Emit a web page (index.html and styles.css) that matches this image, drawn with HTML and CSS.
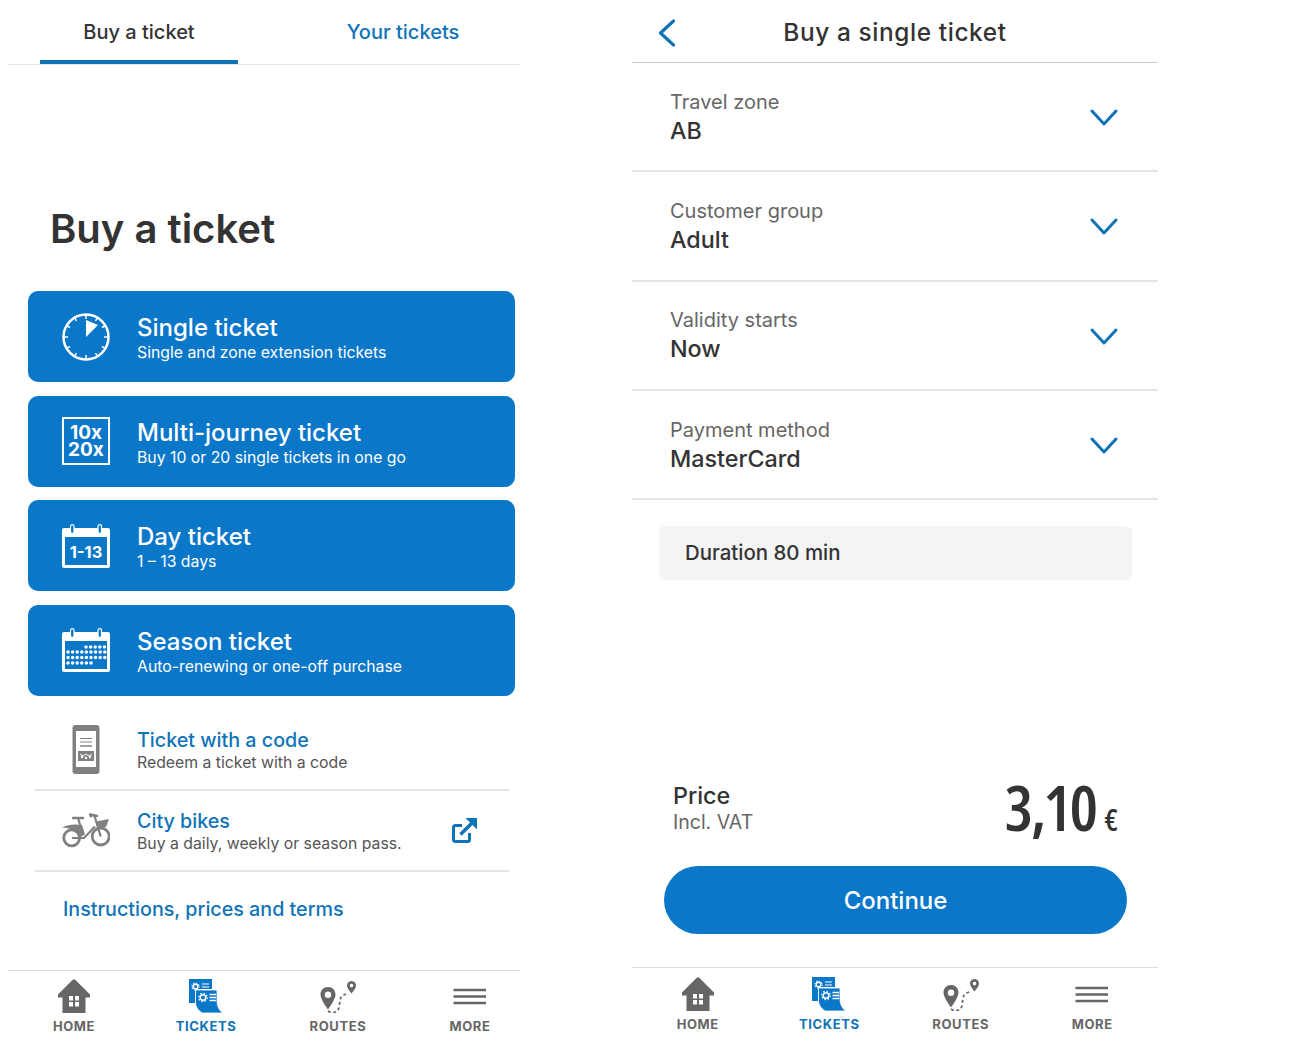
FILE: index.html
```html
<!DOCTYPE html>
<html lang="en">
<head>
  <meta charset="UTF-8">
  <meta name="viewport" content="width=device-width, initial-scale=1.0">
  <title>Buy a ticket</title>
  <link rel="stylesheet" href="styles.css">
</head>
<body>
  <svg class="icon-defs" aria-hidden="true">
    <symbol id="i-home" viewBox="0 0 34 34">
      <path fill="currentColor" fill-rule="evenodd" d="M15.500 1 Q17 -0.500 18.500 1 L33 15.500 V18.500 H28.500 V34 H5.500 V18.500 H1 V15.500 Z M12 17 V21.500 H16 V17 Z M18 17 V21.500 H22 V17 Z M12 23 V27.500 H16 V23 Z M18 23 V27.500 H22 V23 Z"/>
    </symbol>
    <symbol id="i-tickets" viewBox="0 0 34 34">
      <path fill="currentColor" d="M0 0 H23 V10 H6 V24 H0 Z"/>
      <path fill="currentColor" stroke="#fff" stroke-width="0.800" d="M6.500 11 H28 V22 C28 27 30 31 33.500 34 H13 C9 31 6.500 28 6.500 23 Z"/>
      <g fill="none" stroke="#fff">
        <circle cx="6.500" cy="7.500" r="2.300" stroke-width="1.400"/>
        <circle cx="6.500" cy="7.500" r="3.500" stroke-width="1.200" stroke-dasharray="1.300 1.450"/>
        <path stroke-width="1.200" d="M13 5 H20 M13 8 H20"/>
        <circle cx="14" cy="18.500" r="2.800" stroke-width="1.500"/>
        <circle cx="14" cy="18.500" r="4.200" stroke-width="1.300" stroke-dasharray="1.500 1.800"/>
        <path stroke-width="1.300" d="M20.500 15.500 H27 M20.500 18.500 H27 M20.500 21.500 H27"/>
      </g>
    </symbol>
    <symbol id="i-routes" viewBox="0 0 36 32">
      <path fill="currentColor" fill-rule="evenodd" d="M8 6 C3.500 6 0.500 9.500 0.500 13.500 C0.500 18 5 24 8 28.500 C11 24 15.500 18 15.500 13.500 C15.500 9.500 12.500 6 8 6 Z M8 10.500 A3.200 3.200 0 1 1 8 16.900 A3.200 3.200 0 0 1 8 10.500 Z"/>
      <path fill="currentColor" fill-rule="evenodd" d="M31.500 0 C28.500 0 27 2.200 27 4.500 C27 7 29.500 10 31.500 12.500 C33.500 10 36 7 36 4.500 C36 2.200 34.500 0 31.500 0 Z M31.500 2.800 A1.800 1.800 0 1 1 31.500 6.400 A1.800 1.800 0 0 1 31.500 2.800 Z"/>
      <path fill="none" stroke="currentColor" stroke-width="1.700" stroke-dasharray="3 2.500" d="M8 30 C12 33 17 32 19 27 C20 23 19 18 22 15 C24 13.500 26 13.500 28 12"/>
    </symbol>
    <symbol id="i-more" viewBox="0 0 34 17">
      <path fill="none" stroke="currentColor" stroke-width="2.300" d="M0.500 2 H33 M0.500 8.500 H33 M0.500 15 H33"/>
    </symbol>
    <symbol id="i-chevron" viewBox="0 0 28 17">
      <path fill="none" stroke="currentColor" stroke-width="3" stroke-linecap="round" stroke-linejoin="round" d="M2 2 L14 15 L26 2"/>
    </symbol>
    <symbol id="i-calendar" viewBox="0 0 48 44">
      <path fill="#fff" d="M2 4 H46 A2 2 0 0 1 48 6 V42 A2 2 0 0 1 46 44 H2 A2 2 0 0 1 0 42 V6 A2 2 0 0 1 2 4 Z"/>
      <rect x="3" y="13" width="42" height="28" fill="#0a77c9"/>
      <g fill="#0a77c9" stroke="#fff" stroke-width="1.200">
        <rect x="8.500" y="0.600" width="3.500" height="9" rx="1.750"/>
        <rect x="36" y="0.600" width="3.500" height="9" rx="1.750"/>
      </g>
    </symbol>
  </svg>

  <div class="screens">
    <section class="screen screen-list">
      <div class="tabs">
        <div class="tab active">Buy a ticket</div>
        <div class="tab">Your tickets</div>
      </div>

      <h1 class="page-title">Buy a ticket</h1>

      <div class="cards">
        <div class="card">
          <svg class="card-icon" viewBox="0 0 48 48">
            <circle cx="24" cy="24" r="22.500" fill="none" stroke="#fff" stroke-width="2.500"/>
            <path fill="none" stroke="#fff" stroke-width="1.500" d="M24 1.500 V6 M35.500 4.500 L33.500 8 M43.500 12.500 L40 14.500 M46.500 24 H42 M43.500 35.500 L40 33.500 M35.500 43.500 L33.500 40 M24 46.500 V42 M12.500 43.500 L14.500 40 M4.500 35.500 L8 33.500 M1.500 24 H6 M4.500 12.500 L8 14.500 M12.500 4.500 L14.500 8"/>
            <path fill="#fff" d="M24 24 V7 L36 12 Z"/>
          </svg>
          <div class="card-text">
            <div class="card-title">Single ticket</div>
            <div class="card-sub">Single and zone extension tickets</div>
          </div>
        </div>
        <div class="card">
          <div class="count-icon">10x<br>20x</div>
          <div class="card-text">
            <div class="card-title">Multi-journey ticket</div>
            <div class="card-sub">Buy 10 or 20 single tickets in one go</div>
          </div>
        </div>
        <div class="card">
          <svg class="card-icon" viewBox="0 0 48 44">
            <use href="#i-calendar"/>
            <text class="icon-text" x="24" y="33.500" font-size="16.500">1-13</text>
          </svg>
          <div class="card-text">
            <div class="card-title">Day ticket</div>
            <div class="card-sub">1 – 13 days</div>
          </div>
        </div>
        <div class="card">
          <svg class="card-icon" viewBox="0 0 48 44">
            <use href="#i-calendar"/>
            <g fill="none" stroke="#fff" stroke-width="3.500" stroke-linecap="round" stroke-dasharray="0 4.600">
              <path d="M24 19 H43"/>
              <path d="M6 24 H43"/>
              <path d="M6 29.500 H43"/>
              <path d="M6 35 H31"/>
            </g>
          </svg>
          <div class="card-text">
            <div class="card-title">Season ticket</div>
            <div class="card-sub">Auto-renewing or one-off purchase</div>
          </div>
        </div>
      </div>

      <div class="links">
        <div class="link-row">
          <svg class="link-icon" viewBox="0 0 48 49">
            <rect x="10.500" y="0" width="27" height="49" rx="3" fill="#808080"/>
            <rect x="14" y="6" width="20" height="36" fill="#fff"/>
            <path stroke="#808080" stroke-width="1" d="M18 13.500 H30 M18 17 H30"/>
            <path stroke="#808080" stroke-width="1.500" d="M18 21 H30"/>
            <rect x="16" y="26" width="16" height="10" fill="#808080"/>
            <path fill="none" stroke="#fff" stroke-width="1" d="M18 29 L21 31 L24 29 L27 31 L30 29"/>
            <circle cx="20" cy="32" r="1.200" fill="#fff"/>
            <circle cx="24" cy="33" r="1.200" fill="#fff"/>
            <circle cx="28" cy="32" r="1.200" fill="#fff"/>
          </svg>
          <div class="link-text">
            <div class="link-title">Ticket with a code</div>
            <div class="link-sub">Redeem a ticket with a code</div>
          </div>
        </div>
        <div class="link-row">
          <svg class="link-icon" viewBox="0 0 48 36">
            <g fill="none" stroke="#808080">
              <circle cx="9.700" cy="25.300" r="8" stroke-width="2.800"/>
              <circle cx="38.700" cy="24" r="8.500" stroke-width="2.800"/>
              <path stroke-width="2.200" d="M28 4.500 C30 2 32 2 33 5 L38.700 24 M33 14 L22 25.500 H10 M16 5.500 L21 22"/>
              <path stroke-width="2.400" stroke-linecap="round" d="M11 5.500 H21 M28 2 L35 3.500"/>
            </g>
            <path fill="#808080" d="M0 15 C6 11.500 14 11.500 20 12.500 L23 22 L17.500 25 C15 18.500 8 15 0 15 Z"/>
            <path fill="#808080" d="M34 9 L47 6.500 L44 14.500 H36.500 Z"/>
          </svg>
          <div class="link-text">
            <div class="link-title">City bikes</div>
            <div class="link-sub">Buy a daily, weekly or season pass.</div>
          </div>
          <svg class="external-icon" viewBox="0 0 25 25">
            <path fill="none" stroke="#0f73b8" stroke-width="3" stroke-linejoin="round" d="M10 7.500 H3.500 A2 2 0 0 0 1.500 9.500 V21.500 A2 2 0 0 0 3.500 23.500 H15.500 A2 2 0 0 0 17.500 21.500 V15"/>
            <path fill="none" stroke="#0f73b8" stroke-width="3.400" d="M8.500 16.500 L20 5"/>
            <path fill="#0f73b8" d="M13.500 0 H25 V11.500 Z"/>
          </svg>
        </div>
        <div class="link-plain">Instructions, prices and terms</div>
      </div>

      <nav class="bottom-nav">
        <div class="nav-item"><svg class="nav-icon nav-home"><use href="#i-home"/></svg><span>HOME</span></div>
        <div class="nav-item current"><svg class="nav-icon nav-tickets"><use href="#i-tickets"/></svg><span>TICKETS</span></div>
        <div class="nav-item"><svg class="nav-icon nav-routes"><use href="#i-routes"/></svg><span>ROUTES</span></div>
        <div class="nav-item"><svg class="nav-icon nav-more"><use href="#i-more"/></svg><span>MORE</span></div>
      </nav>
    </section>

    <section class="screen screen-form">
      <header class="form-head">
        <svg class="back-icon" viewBox="0 0 18 28">
          <path fill="none" stroke="#0f73b8" stroke-width="3.200" stroke-linecap="round" stroke-linejoin="round" d="M15.500 2 L2.500 14 L15.500 26"/>
        </svg>
        <div class="form-title">Buy a single ticket</div>
      </header>

      <div class="select-row">
        <div><div class="select-label">Travel zone</div><div class="select-value">AB</div></div>
        <svg class="chevron"><use href="#i-chevron"/></svg>
      </div>
      <div class="select-row">
        <div><div class="select-label">Customer group</div><div class="select-value">Adult</div></div>
        <svg class="chevron"><use href="#i-chevron"/></svg>
      </div>
      <div class="select-row">
        <div><div class="select-label">Validity starts</div><div class="select-value">Now</div></div>
        <svg class="chevron"><use href="#i-chevron"/></svg>
      </div>
      <div class="select-row">
        <div><div class="select-label">Payment method</div><div class="select-value">MasterCard</div></div>
        <svg class="chevron"><use href="#i-chevron"/></svg>
      </div>

      <div class="duration">Duration 80 min</div>

      <div class="price-row">
        <div>
          <div class="price-label">Price</div>
          <div class="price-note">Incl. VAT</div>
        </div>
        <div class="price-value">3,10<span class="price-unit">€</span></div>
      </div>

      <button class="continue" type="button">Continue</button>

      <nav class="bottom-nav">
        <div class="nav-item"><svg class="nav-icon nav-home"><use href="#i-home"/></svg><span>HOME</span></div>
        <div class="nav-item current"><svg class="nav-icon nav-tickets"><use href="#i-tickets"/></svg><span>TICKETS</span></div>
        <div class="nav-item"><svg class="nav-icon nav-routes"><use href="#i-routes"/></svg><span>ROUTES</span></div>
        <div class="nav-item"><svg class="nav-icon nav-more"><use href="#i-more"/></svg><span>MORE</span></div>
      </nav>
    </section>
  </div>
</body>
</html>
```

FILE: styles.css
```css
* {
  box-sizing: border-box;
}

:root {
  --blue: #0a77c9;
  --link: #0f73b8;
  --ink: #333333;
  --grey: #666666;
  --line: #dddddd;
}

html, body {
  margin: 0;
  height: 100%;
  background: #fff;
  color: var(--ink);
  font-family: Inter, "Noto Sans", sans-serif;
}

.icon-defs {
  position: absolute;
  width: 0;
  height: 0;
}

.screens {
  display: flex;
  gap: 112px;
  padding-left: 8px;
  height: 1050px;
}

.screen {
  display: flex;
  flex-direction: column;
  height: 1050px;
}

.screen-list {
  width: 512px;
}

.screen-form {
  width: 526px;
}

/* tabs */
.tabs {
  display: flex;
  gap: 66px;
  height: 65px;
  padding-left: 32px;
  border-bottom: 1px solid #e8e8e8;
}

.tab {
  width: 198px;
  height: 64px;
  padding-top: 20px;
  text-align: center;
  font-size: 20px;
  font-weight: 500;
  color: var(--link);
}

.tab.active {
  color: var(--ink);
  border-bottom: 4px solid var(--link);
}

.page-title {
  margin: 140px 0 38px 42px;
  font-size: 40px;
  line-height: 48px;
  font-weight: 600;
}

/* blue cards */
.cards {
  display: flex;
  flex-direction: column;
  gap: 13.670px;
  width: 487px;
  margin-left: 20px;
}

.card {
  display: flex;
  align-items: center;
  gap: 27px;
  height: 91px;
  padding-left: 34px;
  background: var(--blue);
  border-radius: 10px;
  color: #fff;
}

.card-icon {
  width: 48px;
  height: 48px;
  flex: none;
}

.count-icon {
  flex: none;
  width: 48px;
  height: 48px;
  padding-top: 5px;
  border: 2.500px solid #fff;
  text-align: center;
  font-size: 19px;
  line-height: 17px;
  font-weight: 700;
}

.card-text {
  padding-top: 4px;
}

.card-title {
  font-size: 24px;
  line-height: 28px;
  font-weight: 500;
}

.card-sub {
  margin-top: 1px;
  font-size: 15.800px;
  line-height: 20px;
}

.icon-text {
  fill: #fff;
  font-family: Inter, sans-serif;
  font-weight: 700;
  text-anchor: middle;
}

/* plain links under the cards */
.links {
  width: 474px;
  margin: 14px 0 0 27px;
}

.link-row {
  display: flex;
  align-items: center;
  gap: 27px;
  height: 81px;
  padding-left: 27px;
  border-bottom: 2px solid #e4e4e4;
}

.link-icon {
  width: 48px;
  height: 49px;
  flex: none;
}

.link-text {
  padding-top: 4px;
}

.link-title {
  font-size: 19.700px;
  line-height: 24px;
  font-weight: 500;
  color: var(--link);
}

.link-sub {
  font-size: 15.800px;
  line-height: 22px;
  color: #555;
}

.external-icon {
  width: 25px;
  height: 25px;
  margin-left: auto;
  margin-right: 32px;
}

.link-plain {
  padding: 25px 0 0 28px;
  font-size: 19.700px;
  line-height: 24px;
  font-weight: 500;
  color: var(--link);
}

/* bottom navigation */
.bottom-nav {
  display: grid;
  grid-template-columns: repeat(4, 1fr);
  margin-top: auto;
  border-top: 1px solid var(--line);
}

.screen-list .bottom-nav {
  grid-template-columns: repeat(4, 132px);
  height: 80px;
}

.screen-form .bottom-nav {
  height: 83px;
  margin-top: 0;
}

.nav-item {
  display: flex;
  flex-direction: column;
  align-items: center;
  padding-top: 8px;
  font-size: 13px;
  font-weight: 700;
  letter-spacing: 0.6px;
  color: var(--grey);
}

.screen-form .nav-item {
  padding-top: 9px;
}

.nav-item.current {
  color: var(--link);
}

.nav-item span {
  margin-top: 5px;
  line-height: 16px;
}

.nav-icon {
  display: block;
}

.nav-home {
  width: 34px;
  height: 34px;
}

.nav-tickets {
  width: 34px;
  height: 34px;
  color: var(--blue);
}

.nav-routes {
  width: 36px;
  height: 32px;
  margin-top: 2px;
}

.nav-more {
  width: 34px;
  height: 17px;
  margin-top: 9px;
  margin-bottom: 8px;
}

/* single ticket form */
.form-head {
  display: flex;
  align-items: center;
  justify-content: center;
  position: relative;
  height: 63px;
  padding-top: 2px;
  border-bottom: 1px solid #cccccc;
}

.back-icon {
  position: absolute;
  left: 26px;
  top: 19px;
  width: 18px;
  height: 28px;
}

.form-title {
  font-size: 24.400px;
  font-weight: 500;
  letter-spacing: 0.6px;
}

.select-row {
  display: flex;
  align-items: center;
  justify-content: space-between;
  height: 109.330px;
  padding: 0 40px 0 38px;
  border-bottom: 2px solid #e4e4e4;
}

.select-label {
  padding-top: 1px;
  font-size: 20px;
  line-height: 28px;
  color: var(--grey);
}

.select-value {
  padding-bottom: 1px;
  font-size: 23.300px;
  line-height: 30px;
  font-weight: 500;
}

.chevron {
  width: 28px;
  height: 17px;
  margin-top: 2px;
  color: var(--link);
}

.duration {
  height: 54px;
  margin: 26px 26px 0 27px;
  padding-left: 26px;
  background: #f4f4f4;
  border-radius: 6px;
  font-size: 20.400px;
  font-weight: 500;
  line-height: 54px;
}

.price-row {
  display: flex;
  align-items: center;
  justify-content: space-between;
  margin: auto 40px 14px 41px;
}

.price-label {
  font-size: 23.300px;
  line-height: 28px;
  font-weight: 500;
}

.price-note {
  font-size: 19.500px;
  line-height: 25px;
  color: var(--grey);
}

.price-value {
  margin-top: 10px;
  font-family: "Open Sans", sans-serif;
  font-size: 64px;
  line-height: 64px;
  font-weight: 600;
  font-stretch: 75%;
  letter-spacing: -2.500px;
}

.price-unit {
  margin-left: 9px;
  font-size: 30px;
  letter-spacing: 0;
}

.continue {
  display: block;
  width: 463px;
  height: 68px;
  margin: 0 31px 33px 32px;
  background: var(--blue);
  border: 0;
  border-radius: 34px;
  color: #fff;
  font: inherit;
  font-size: 24px;
  font-weight: 500;
}
```
